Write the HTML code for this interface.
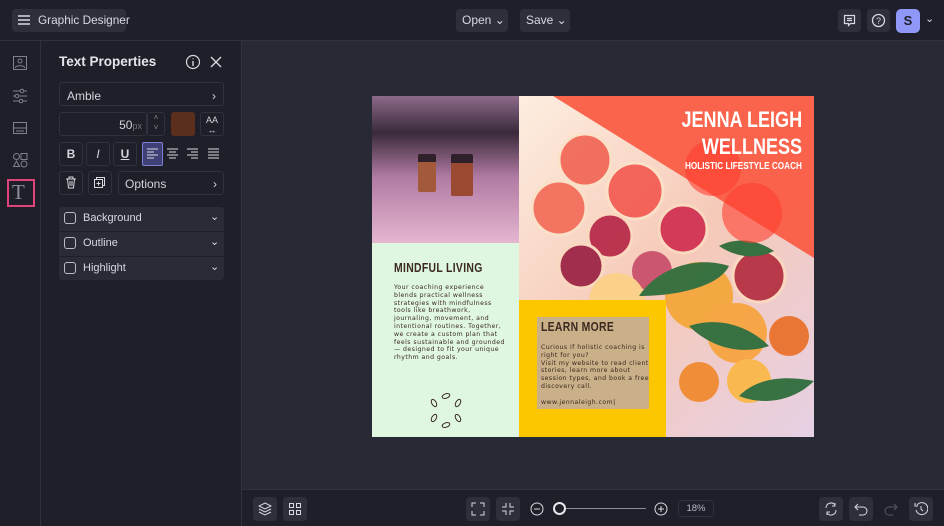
<!DOCTYPE html>
<html><head><style>
*{box-sizing:border-box;margin:0;padding:0}
body{width:944px;height:526px;background:#272934;font-family:"Liberation Sans",sans-serif;position:relative;overflow:hidden;color:#d8d9e0}
.abs{position:absolute}
.btn{position:absolute;background:#2d2f3a;border-radius:4px}
.top{left:0;top:0;width:944px;height:41px;background:#1e1f28;border-bottom:1px solid #30323c}
.side{left:0;top:41px;width:242px;height:485px;background:#1e1f28;border-right:1px solid #30323c}
.rail{left:40px;top:41px;width:1px;height:485px;background:#2e303a}
.f{position:absolute;border:1px solid #2f313b;border-radius:3px;background:#1e1f28;font-size:12px;color:#d4d5dc}
.bot{left:242px;top:489px;width:702px;height:37px;background:#1e1f28;border-top:1px solid #30323c}
.t{font-size:6.2px;color:#3a281e;line-height:7.8px;letter-spacing:.45px;font-family:"DejaVu Sans",sans-serif}
.cond{font-family:"Liberation Sans Narrow","Liberation Sans",sans-serif;font-weight:bold;transform-origin:left top}
</style></head><body>
<div class="abs top"></div>
<div class="btn" style="left:12px;top:9px;width:114px;height:23px"></div>
<svg class="abs" style="left:17px;top:13px" width="14" height="14"><path d="M1 3h12M1 7h12M1 11h12" stroke="#d8d9e0" stroke-width="1.5"/></svg>
<div class="abs" style="left:38px;top:13px;font-size:11.8px;color:#d8d9e0">Graphic Designer</div>
<div class="btn" style="left:456px;top:9px;width:52px;height:23px"></div>
<div class="abs" style="left:462px;top:13px;font-size:12px">Open ⌄</div>
<div class="btn" style="left:520px;top:9px;width:50px;height:23px"></div>
<div class="abs" style="left:526px;top:13px;font-size:12px">Save ⌄</div>
<div class="btn" style="left:838px;top:9px;width:23px;height:23px"></div>
<svg class="abs" style="left:843px;top:14px" width="13" height="13"><path d="M1.5 1.5h10v8h-4l-2 2v-2h-4z M4 4.5h5M4 6.5h5" stroke="#d8d9e0" fill="none" stroke-width="1.2"/></svg>
<div class="btn" style="left:867px;top:9px;width:23px;height:23px"></div>
<svg class="abs" style="left:871px;top:13px" width="15" height="15"><circle cx="7.5" cy="7.5" r="6" stroke="#d8d9e0" fill="none" stroke-width="1.3"/><text x="5" y="11" font-size="9" fill="#d8d9e0" font-family="Liberation Sans">?</text></svg>
<div class="abs" style="left:896px;top:9px;width:24px;height:24px;background:#8f97f7;border-radius:5px;color:#1e1f28;font-weight:bold;font-size:13px;text-align:center;line-height:24px">S</div>
<div class="abs" style="left:925px;top:12px;font-size:11px">⌄</div>

<div class="abs side"></div>
<div class="abs rail"></div>
<svg class="abs" style="left:12px;top:55px" width="16" height="16"><rect x="1.5" y="1.5" width="13" height="13" stroke="#7e8190" fill="none"/><circle cx="8" cy="6" r="2" stroke="#7e8190" fill="none"/><path d="M3 13c1-3 9-3 10 0" stroke="#7e8190" fill="none"/></svg>
<svg class="abs" style="left:12px;top:88px" width="16" height="16"><path d="M1 3h14M1 8h14M1 13h14" stroke="#7e8190"/><circle cx="10" cy="3" r="1.8" fill="#1e1f28" stroke="#7e8190"/><circle cx="5" cy="8" r="1.8" fill="#1e1f28" stroke="#7e8190"/><circle cx="9" cy="13" r="1.8" fill="#1e1f28" stroke="#7e8190"/></svg>
<svg class="abs" style="left:12px;top:120px" width="16" height="16"><rect x="1.5" y="2.5" width="13" height="11" stroke="#7e8190" fill="none"/><path d="M1.5 8h13M4 11h8" stroke="#7e8190"/></svg>
<svg class="abs" style="left:12px;top:152px" width="16" height="16"><circle cx="4.5" cy="4.5" r="3" stroke="#7e8190" fill="none"/><rect x="9" y="1.5" width="6" height="6" stroke="#7e8190" fill="none"/><path d="M4.5 9l3 5.5h-6z" stroke="#7e8190" fill="none"/><circle cx="12" cy="12" r="3" stroke="#7e8190" fill="none"/></svg>
<div class="abs" style="left:7px;top:179px;width:28px;height:28px;border:2px solid #e0427a"></div>
<div class="abs" style="left:12px;top:180px;font-size:21px;color:#8a8d9a;font-family:'Liberation Serif',serif">T</div>

<div class="abs" style="left:59px;top:54px;font-size:13.5px;font-weight:bold;color:#e4e5ea">Text Properties</div>
<svg class="abs" style="left:185px;top:54px" width="16" height="16"><circle cx="8" cy="8" r="6.5" stroke="#d8d9e0" fill="none" stroke-width="1.2"/><path d="M8 7v5M8 4.5v.8" stroke="#d8d9e0" stroke-width="1.4"/></svg>
<svg class="abs" style="left:210px;top:56px" width="12" height="12"><path d="M1 1l10 10M11 1L1 11" stroke="#d8d9e0" stroke-width="1.4"/></svg>

<div class="f" style="left:59px;top:82px;width:165px;height:24px;padding:6px 7px">Amble<span style="float:right">›</span></div>
<div class="f" style="left:59px;top:112px;width:88px;height:24px;text-align:right;padding:5px 4px">50<span style="font-size:9px;color:#777">px</span></div>
<div class="f" style="left:147px;top:112px;width:18px;height:24px;font-size:8px;text-align:center;color:#888;line-height:10px">˄<br>˅</div>
<div class="abs" style="left:171px;top:112px;width:24px;height:24px;background:#5c2e1c;border-radius:3px"></div>
<div class="f" style="left:200px;top:112px;width:24px;height:24px;font-size:9px;text-align:center;line-height:10px;padding-top:2px">AA<br>↔</div>
<div class="f" style="left:59px;top:142px;width:24px;height:24px;text-align:center;line-height:22px;font-weight:bold">B</div>
<div class="f" style="left:86px;top:142px;width:24px;height:24px;text-align:center;line-height:22px;font-style:italic">I</div>
<div class="f" style="left:113px;top:142px;width:24px;height:24px;text-align:center;line-height:22px;text-decoration:underline;font-weight:bold">U</div>
<div class="abs" style="left:142px;top:142px;width:21px;height:24px;background:#3f4076;border:1px solid #7d7fd6;border-radius:2px"></div>
<svg class="abs" style="left:146px;top:148px" width="13" height="12"><path d="M1 1h11M1 4h7M1 7h11M1 10h7" stroke="#d8d9e0"/></svg>
<svg class="abs" style="left:166px;top:148px" width="13" height="12"><path d="M1 1h11M3 4h7M1 7h11M3 10h7" stroke="#d8d9e0"/></svg>
<svg class="abs" style="left:186px;top:148px" width="13" height="12"><path d="M1 1h11M5 4h7M1 7h11M5 10h7" stroke="#d8d9e0"/></svg>
<svg class="abs" style="left:207px;top:148px" width="13" height="12"><path d="M1 1h11M1 4h11M1 7h11M1 10h11" stroke="#d8d9e0"/></svg>
<div class="f" style="left:59px;top:171px;width:24px;height:24px"></div>
<svg class="abs" style="left:65px;top:176px" width="12" height="13"><path d="M1 3h10M4 3V1h4v2M2.5 3l1 9h5l1-9M5 5v5M7 5v5" stroke="#d8d9e0" fill="none"/></svg>
<div class="f" style="left:88px;top:171px;width:24px;height:24px"></div>
<svg class="abs" style="left:93px;top:176px" width="13" height="13"><rect x="3.5" y="1.5" width="8" height="8" stroke="#d8d9e0" fill="none"/><rect x="1.5" y="3.5" width="8" height="8" stroke="#d8d9e0" fill="#1e1f28"/><path d="M5.5 5.5v4M3.5 7.5h4" stroke="#d8d9e0"/></svg>
<div class="f" style="left:118px;top:171px;width:106px;height:24px;padding:5px 6px">Options<span style="float:right">›</span></div>

<div class="abs" style="left:59px;top:207px;width:165px;height:73px;background:#292b36;border-radius:3px"></div>
<div class="abs" style="left:59px;top:231px;width:165px;height:1px;background:#1e1f28"></div>
<div class="abs" style="left:59px;top:256px;width:165px;height:1px;background:#1e1f28"></div>
<div class="abs" style="left:64px;top:212px;width:12px;height:12px;border:1px solid #b9bbc5;border-radius:3px"></div>
<div class="abs" style="left:64px;top:237px;width:12px;height:12px;border:1px solid #b9bbc5;border-radius:3px"></div>
<div class="abs" style="left:64px;top:262px;width:12px;height:12px;border:1px solid #b9bbc5;border-radius:3px"></div>
<div class="abs" style="left:83px;top:212px;font-size:11px">Background</div>
<div class="abs" style="left:83px;top:237px;font-size:11px">Outline</div>
<div class="abs" style="left:83px;top:262px;font-size:11px">Highlight</div>
<div class="abs" style="left:210px;top:210px;font-size:11px">⌄</div>
<div class="abs" style="left:210px;top:235px;font-size:11px">⌄</div>
<div class="abs" style="left:210px;top:260px;font-size:11px">⌄</div>

<div class="abs" style="left:372px;top:96px;width:442px;height:341px;background:#dff6e0;overflow:hidden">
 <div class="abs" style="left:147px;top:0;width:295px;height:341px;background:linear-gradient(135deg,#fdeee0 0%,#f6c9b8 50%,#e6d0e4 100%)"></div>
 <svg class="abs" style="left:147px;top:0" width="295" height="341">
  <g opacity=".95">
  <circle cx="66" cy="64" r="26" fill="#f26a5a" stroke="#fbe1c8" stroke-width="3"/>
  <circle cx="116" cy="95" r="28" fill="#f35e55" stroke="#fbe1c8" stroke-width="3"/>
  <circle cx="40" cy="112" r="27" fill="#f3705c" stroke="#fbe1c8" stroke-width="3"/>
  <circle cx="91" cy="140" r="22" fill="#b82d4c" stroke="#fbd9c0" stroke-width="3"/>
  <circle cx="164" cy="133" r="24" fill="#d23352" stroke="#fbd9c0" stroke-width="3"/>
  <circle cx="62" cy="170" r="22" fill="#9c2646" stroke="#fbd9c0" stroke-width="3"/>
  <circle cx="133" cy="175" r="20" fill="#c9506c"/>
  <circle cx="98" cy="205" r="28" fill="#fbd189"/>
  <circle cx="180" cy="200" r="34" fill="#f4a73c"/>
  <circle cx="240" cy="180" r="26" fill="#b43244" stroke="#fbd9c0" stroke-width="3"/>
  <circle cx="218" cy="237" r="30" fill="#f8a540"/>
  <circle cx="230" cy="285" r="22" fill="#fbb84a"/>
  <circle cx="180" cy="286" r="20" fill="#f18a32"/>
  <circle cx="270" cy="240" r="20" fill="#e9722c"/>
  <path d="M120 200c20-30 60-40 90-30-10 20-50 30-90 30zM170 230c30-10 60 0 80 20-30 10-60 0-80-20zM220 300c20-20 50-20 75-15-20 20-50 25-75 15zM200 150c20-10 40-5 55 5-20 10-40 5-55-5z" fill="#2f6d3b"/>
  </g>
 </svg>
 <svg class="abs" style="left:0;top:0" width="442" height="341"><polygon points="181,0 442,0 442,162" fill="#fa5a43" opacity=".93"/>
  <circle cx="341" cy="72" r="28" fill="#ff3d2e" opacity=".6"/><circle cx="380" cy="117" r="30" fill="#ff3d2e" opacity=".6"/></svg>
 <div class="abs" style="left:0;top:0;width:147px;height:147px;background:linear-gradient(180deg,#8c6a8a 0%,#3a2a3a 25%,#b17aa3 55%,#e5b6d0 100%)"></div>
 <div class="abs" style="left:46px;top:58px;width:18px;height:38px;background:#a35a3a;border-top:8px solid #30202a;border-radius:2px"></div>
 <div class="abs" style="left:79px;top:58px;width:22px;height:42px;background:#9a4a30;border-top:9px solid #30202a;border-radius:2px"></div>
 <div class="abs" style="left:147px;top:204px;width:147px;height:137px;background:#fdc700"></div>
 <div class="abs" style="left:165px;top:221px;width:112px;height:92px;background:#c9b089"></div>
 <div class="abs cond" style="right:12px;top:10px;font-size:22px;color:#fff;text-align:right;line-height:27px;transform:scaleX(.82);transform-origin:right top">JENNA LEIGH<br>WELLNESS</div>
 <div class="abs cond" style="right:12px;top:64px;font-size:10.5px;color:#fff;transform:scaleX(.78);transform-origin:right top">HOLISTIC LIFESTYLE COACH</div>
 <div class="abs cond" style="left:22px;top:164px;font-size:13px;color:#3c2a20;letter-spacing:.4px;transform:scaleX(.8)">MINDFUL LIVING</div>
 <div class="abs t" style="left:22px;top:188px;width:112px">Your coaching experience blends practical wellness strategies with mindfulness tools like breathwork, journaling, movement, and intentional routines. Together, we create a custom plan that feels sustainable and grounded — designed to fit your unique rhythm and goals.</div>
 <div class="abs cond" style="left:169px;top:223px;font-size:13px;color:#3c2a20;letter-spacing:.4px;transform:scaleX(.8)">LEARN MORE</div>
 <div class="abs t" style="left:169px;top:248px;width:110px">Curious if holistic coaching is right for you?<br>Visit my website to read client stories, learn more about session types, and book a free discovery call.<br><br>www.jennaleigh.com|</div>
 <svg class="abs" style="left:54px;top:295px" width="40" height="40"><g fill="none" stroke="#3c2a20" stroke-width="1"><ellipse cx="20" cy="5" rx="4" ry="2.2" transform="rotate(-20 20 5)"/><ellipse cx="32" cy="12" rx="2.2" ry="4" transform="rotate(30 32 12)"/><ellipse cx="32" cy="27" rx="2.2" ry="4" transform="rotate(-30 32 27)"/><ellipse cx="20" cy="34" rx="4" ry="2.2" transform="rotate(-20 20 34)"/><ellipse cx="8" cy="27" rx="2.2" ry="4" transform="rotate(30 8 27)"/><ellipse cx="8" cy="12" rx="2.2" ry="4" transform="rotate(-30 8 12)"/></g></svg>
</div>

<div class="abs bot"></div>
<div class="btn" style="left:253px;top:497px;width:24px;height:24px"></div>
<svg class="abs" style="left:258px;top:502px" width="14" height="14"><path d="M7 1l6 3-6 3-6-3zM1 7l6 3 6-3M1 10l6 3 6-3" stroke="#d8d9e0" fill="none"/></svg>
<div class="btn" style="left:283px;top:497px;width:24px;height:24px"></div>
<svg class="abs" style="left:288px;top:502px" width="14" height="14"><rect x="1.5" y="1.5" width="4" height="4" stroke="#d8d9e0" fill="none"/><rect x="8.5" y="1.5" width="4" height="4" stroke="#d8d9e0" fill="none"/><rect x="1.5" y="8.5" width="4" height="4" stroke="#d8d9e0" fill="none"/><rect x="8.5" y="8.5" width="4" height="4" stroke="#d8d9e0" fill="none"/></svg>
<div class="btn" style="left:466px;top:497px;width:24px;height:24px"></div>
<svg class="abs" style="left:471px;top:502px" width="14" height="14"><path d="M1 5V1h4M9 1h4v4M13 9v4H9M5 13H1V9" stroke="#d8d9e0" fill="none"/></svg>
<div class="btn" style="left:496px;top:497px;width:24px;height:24px"></div>
<svg class="abs" style="left:501px;top:502px" width="14" height="14"><path d="M1 5h4V1M9 1v4h4M13 9H9v4M5 13V9H1" stroke="#d8d9e0" fill="none"/></svg>
<svg class="abs" style="left:530px;top:502px" width="14" height="14"><circle cx="7" cy="7" r="6" stroke="#d8d9e0" fill="none"/><path d="M4 7h6" stroke="#d8d9e0"/></svg>
<div class="abs" style="left:560px;top:508px;width:86px;height:1px;background:#8a8d9a"></div>
<div class="abs" style="left:553px;top:502px;width:13px;height:13px;border:2px solid #e8e8ee;border-radius:50%;background:#1e1f28"></div>
<svg class="abs" style="left:654px;top:502px" width="14" height="14"><circle cx="7" cy="7" r="6" stroke="#d8d9e0" fill="none"/><path d="M4 7h6M7 4v6" stroke="#d8d9e0"/></svg>
<div class="abs" style="left:678px;top:500px;width:36px;height:17px;border:1px solid #2f313b;border-radius:3px;font-size:9.5px;text-align:center;line-height:15px;color:#b8bac4">18%</div>
<div class="btn" style="left:819px;top:497px;width:24px;height:24px"></div>
<svg class="abs" style="left:824px;top:502px" width="14" height="14"><path d="M2 6a5 5 0 0 1 9-3M12 8a5 5 0 0 1-9 3M11 1v3H8M3 13v-3h3" stroke="#d8d9e0" fill="none"/></svg>
<div class="btn" style="left:849px;top:497px;width:24px;height:24px"></div>
<svg class="abs" style="left:854px;top:502px" width="14" height="14"><path d="M4 2L1 5l3 3M1 5h8a4 4 0 0 1 0 8H5" stroke="#d8d9e0" fill="none"/></svg>
<svg class="abs" style="left:884px;top:502px" width="14" height="14"><path d="M10 2l3 3-3 3M13 5H5a4 4 0 0 0 0 8h4" stroke="#555866" fill="none"/></svg>
<div class="btn" style="left:909px;top:497px;width:24px;height:24px"></div>
<svg class="abs" style="left:914px;top:502px" width="14" height="14"><path d="M3 3a6 6 0 1 1-1 5M1 1v3h3M7 4v3l2 2" stroke="#d8d9e0" fill="none"/></svg>
</body></html>
